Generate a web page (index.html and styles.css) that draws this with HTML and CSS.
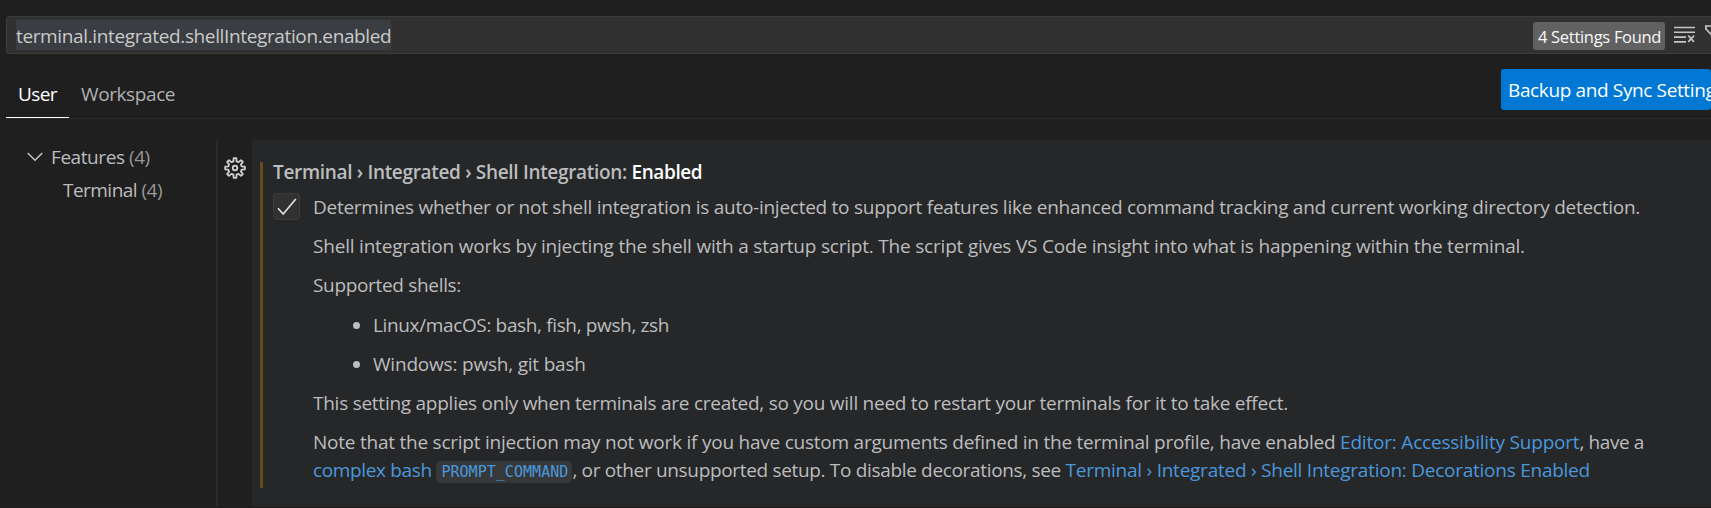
FILE: index.html
```html
<!DOCTYPE html>
<html lang="en">
<head>
<meta charset="utf-8">
<title>Settings</title>
<link rel="stylesheet" href="styles.css">
</head>
<body>
<div class="settings-editor">
  <div class="search">
    <span class="query">terminal.integrated.shellIntegration.enabled</span>
    <div class="search-tools">
      <span class="badge">4 Settings Found</span>
      <svg class="icon-clear" width="22" height="18" viewBox="0 0 22 18" fill="none" stroke="#c5c5c5" stroke-width="1.6"><path d="M0 1.5H21M0 6.3H21M0 11.1H12M0 15.9H12"/><path d="M14.3 9.6L20 15.9M20 9.6L14.3 15.9"/></svg>
      <svg class="icon-filter" width="21" height="20" viewBox="0 0 21 20" fill="none" stroke="#c5c5c5" stroke-width="1.7"><path d="M.9 1H19.5V4L12.5 11V18.5L7.8 16V11L.9 4Z"/></svg>
    </div>
  </div>
  <div class="header">
    <div class="tabs">
      <div class="tab active"><span class="t-user">User</span></div>
      <div class="tab"><span class="t-work">Workspace</span></div>
    </div>
    <div class="sync">Backup and Sync Settings</div>
  </div>
  <div class="body">
    <div class="toc">
      <div class="toc-row">
        <svg class="chevron" width="16" height="10" viewBox="0 0 16 10" fill="none" stroke="#c5c5c5" stroke-width="1.5"><path d="M.7 1L8 8.3L15.3 1"/></svg>
        <span class="t-feat">Features <span class="count">(4)</span></span>
      </div>
      <div class="toc-row child"><span class="t-term">Terminal <span class="count">(4)</span></span></div>
    </div>
    <div class="gutter">
      <svg class="gear" width="22" height="22" viewBox="-11 -11 22 22" fill="none" stroke="#d0d0d0" stroke-width="1.8" stroke-linejoin="round"><path d="M-1.6 -6.7L-1.3 -9.8H1.3L1.6 -6.7L3.6 -5.9L6 -7.9L7.9 -6L5.9 -3.6L6.7 -1.6L9.8 -1.3V1.3L6.7 1.6L5.9 3.6L7.9 6L6 7.9L3.6 5.9L1.6 6.7L1.3 9.8H-1.3L-1.6 6.7L-3.6 5.9L-6 7.9L-7.9 6L-5.9 3.6L-6.7 1.6L-9.8 1.3V-1.3L-6.7 -1.6L-5.9 -3.6L-7.9 -6L-6 -7.9L-3.6 -5.9Z"/><circle r="2.3"/></svg>
    </div>
    <div class="panel">
      <div class="setting">
        <div class="title"><span class="category">Terminal › Integrated › Shell Integration: </span><span class="label">Enabled</span></div>
        <div class="value">
          <div class="checkbox"><svg width="20" height="18" viewBox="0 0 20 18" fill="none" stroke="#e0e0e0" stroke-width="1.7"><path d="M1 10.2L6.2 16L18.8 1"/></svg></div>
          <div class="description">
            <p class="l1">Determines whether or not shell integration is auto-injected to support features like enhanced command tracking and current working directory detection.</p>
            <p class="l2">Shell integration works by injecting the shell with a startup script. The script gives VS Code insight into what is happening within the terminal.</p>
            <p class="l3">Supported shells:</p>
            <ul>
              <li class="l4">Linux/macOS: bash, fish, pwsh, zsh</li>
              <li class="l5">Windows: pwsh, git bash</li>
            </ul>
            <p class="l6">This setting applies only when terminals are created, so you will need to restart your terminals for it to take effect.</p>
            <p class="note"><span class="l7">Note that the script injection may not work if you have custom arguments defined in the terminal profile, have enabled </span><a class="l8">Editor: Accessibility Support</a><span class="l9">, have a</span><br><a class="l10">complex bash <code>PROMPT_COMMAND</code></a><span class="l11">, or other unsupported setup. To disable decorations, see </span><a class="l12">Terminal › Integrated › Shell Integration: Decorations Enabled</a></p>
          </div>
        </div>
      </div>
    </div>
  </div>
</div>
</body>
</html>
```
FILE: styles.css
```css
* { box-sizing: border-box; }

body {
  margin: 0;
  background: #1f1f1f;
  color: #bcbdbe;
  font: 19px/28px "Open Sans", "Noto Sans", sans-serif;
  overflow: hidden;
}

.settings-editor {
  display: flex;
  flex-direction: column;
  height: 508px;
  padding-top: 16px;
  border-bottom: 1px solid #231a1e;
  white-space: nowrap;
  overflow: hidden;
}

.search {
  display: flex;
  align-items: center;
  justify-content: space-between;
  width: 1760px;
  height: 38px;
  margin-left: 6px;
  padding-left: 9px;
  background: #313131;
  border: 1px solid #3c3c3c;
  border-radius: 3px;
}

.query {
  height: 30px;
  line-height: 33px;
  background: #3a3d41;
  color: #cacaca;
  letter-spacing: -0.365px;
}

.search-tools { display: flex; width: 232px; padding-top: 1px; }

.badge {
  width: 132px;
  height: 28px;
  padding-left: 5px;
  background: #616161;
  border-radius: 3px;
  color: #f8f8f8;
  font-size: 16.5px;
  line-height: 30px;
  letter-spacing: -0.3px;
}

.icon-clear { margin: 4px 0 0 9px; }
.icon-filter { margin: 3px 0 0 9px; }

.header {
  display: flex;
  justify-content: space-between;
  height: 65px;
  margin-left: 6px;
  padding-top: 15px;
  border-bottom: 1px solid #2b2b2b;
}

.tabs { display: flex; }

.tab {
  height: 49px;
  padding: 11px 12px 0;
  color: #b0b0b0;
}

.tab.active {
  width: 63px;
  color: #fff;
  border-bottom: 1px solid #fff;
}

.t-user { letter-spacing: -0.6px; }
.t-work { letter-spacing: -0.4px; }

.sync {
  width: 210px;
  height: 41px;
  padding-left: 7px;
  background: #0078d4;
  border-radius: 3px;
  color: #fff;
  line-height: 42px;
  letter-spacing: -0.37px;
}

.body {
  display: flex;
  flex: 1;
  margin-top: 21px;
}

.toc {
  width: 218px;
  padding-left: 27px;
  border-right: 2px solid #2b2b2b;
}

.toc-row {
  display: flex;
  align-items: center;
  gap: 8px;
  height: 33px;
}

.toc-row.child { padding-left: 36px; }
.t-feat { letter-spacing: -0.43px; }
.t-term { letter-spacing: -0.53px; }
.count { color: #979797; }

.gutter {
  width: 34px;
  padding: 17px 0 0 6px;
}

.panel {
  flex: 1;
  padding: 22px 0 19px 8px;
  background: #262729;
}

.setting {
  height: 326px;
  padding-left: 10px;
  border-left: 3px solid #654d1a;
}

.title {
  height: 31px;
  line-height: 20px;
  font-weight: 600;
}

.category { letter-spacing: -0.32px; }
.label { color: #fff; letter-spacing: -0.4px; }

.value { display: flex; gap: 13px; }

.checkbox {
  width: 27px;
  height: 27px;
  padding: 4px 3px;
  background: #313131;
  border: 1px solid #3c3c3c;
  border-radius: 4px;
  line-height: 0;
}

.description p { margin: 0 0 11px; }
.description ul { margin: 12px 0 11px; padding-left: 60px; }
.description li { margin-bottom: 11px; }

.description a { color: #4a98dc; }

.description code {
  display: inline-block;
  width: 136px;
  height: 22px;
  padding-left: 5px;
  background: #37383a;
  border-radius: 5px;
  font: 15px/22px "DejaVu Sans Mono", monospace;
  letter-spacing: 0.04px;
}

.l1 { letter-spacing: -0.26px; }
.l2 { letter-spacing: -0.2px; }
.l3 { letter-spacing: -0.325px; }
.l4 { letter-spacing: -0.36px; }
.l5 { letter-spacing: -0.2px; }
.l6 { letter-spacing: -0.255px; }
.l7 { letter-spacing: -0.232px; }
.l8 { letter-spacing: -0.2px; }
.l9 { letter-spacing: -0.4px; }
.l10 { letter-spacing: -0.35px; }
.l11 { letter-spacing: -0.33px; }
.l12 { letter-spacing: -0.25px; }
```
